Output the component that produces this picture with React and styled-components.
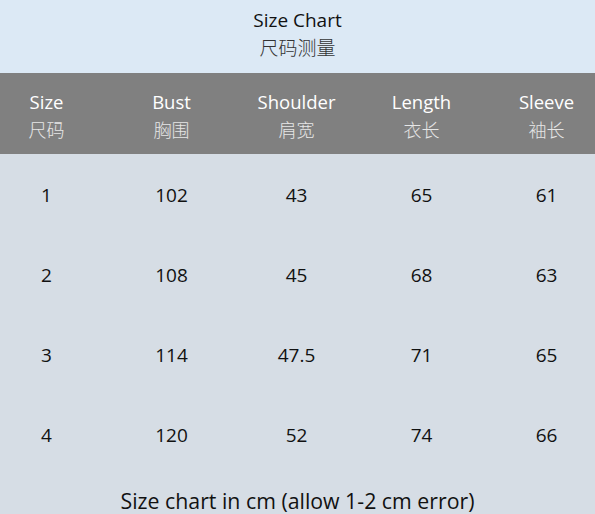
import React from "react";
import styled, { createGlobalStyle } from "styled-components";

const Global = createGlobalStyle`
  html, body { margin: 0; padding: 0; }
  body { width: 595px; height: 514px; overflow: hidden; background: #d6dde5; }
`;

const latin = `"Comic Sans MS", "Open Sans", "Noto Sans CJK SC", sans-serif`;
const cjk = `"Noto Sans CJK SC", sans-serif`;

const Page = styled.div`
  width: 595px;
  height: 514px;
  display: flex;
  flex-direction: column;
  background: #d6dde5;
  overflow: hidden;
`;

const TitleBand = styled.header`
  height: 73px;
  flex-shrink: 0;
  background: #dce9f5;
  display: flex;
  flex-direction: column;
  align-items: center;
  padding-top: 7px;
  box-sizing: border-box;
`;

const Title = styled.div`
  font-family: ${latin};
  font-size: 19px;
  line-height: 26px;
  color: #111;
`;

const SubTitle = styled.div`
  font-family: ${cjk};
  font-weight: 300;
  font-size: 19px;
  line-height: 28px;
  color: #333;
`;

const Grid = styled.div`
  display: grid;
  grid-template-columns: repeat(5, 125px);
  justify-content: center;
  padding-right: 2px;
`;

const HeadRow = styled(Grid)`
  height: 81px;
  flex-shrink: 0;
  background: #808080;
  align-items: center;
`;

const HeadCell = styled.div`
  display: flex;
  flex-direction: column;
  align-items: center;
  padding-top: 4px;
`;

const HeadEn = styled.div`
  font-family: ${latin};
  font-size: 18.5px;
  line-height: 26px;
  margin-bottom: 1px;
  color: #ffffff;
`;

const HeadCn = styled.div`
  font-family: ${cjk};
  font-weight: 300;
  font-size: 18px;
  line-height: 26px;
  color: #e6e6e6;
`;

const Body = styled.div`
  display: flex;
  flex-direction: column;
  padding-top: 1px;
`;

const DataRow = styled(Grid)`
  height: 80px;
  align-items: center;
`;

const DataCell = styled.div`
  text-align: center;
  font-family: ${latin};
  font-size: 19px;
  color: #111;
`;

const Footer = styled.div`
  text-align: center;
  font-family: ${latin};
  font-size: 21.3px;
  color: #111;
  margin-top: 11px;
`;

const headers = [
  ["Size", "尺码"],
  ["Bust", "胸围"],
  ["Shoulder", "肩宽"],
  ["Length", "衣长"],
  ["Sleeve", "袖长"],
];

const rows = [
  ["1", "102", "43", "65", "61"],
  ["2", "108", "45", "68", "63"],
  ["3", "114", "47.5", "71", "65"],
  ["4", "120", "52", "74", "66"],
];

export default function App() {
  return (
    <Page>
      <Global />
      <TitleBand>
        <Title>Size Chart</Title>
        <SubTitle>尺码测量</SubTitle>
      </TitleBand>
      <HeadRow>
        {headers.map(([en, cn]) => (
          <HeadCell key={en}>
            <HeadEn>{en}</HeadEn>
            <HeadCn>{cn}</HeadCn>
          </HeadCell>
        ))}
      </HeadRow>
      <Body>
        {rows.map((r) => (
          <DataRow key={r[0]}>
            {r.map((v, i) => (
              <DataCell key={i}>{v}</DataCell>
            ))}
          </DataRow>
        ))}
      </Body>
      <Footer>Size chart in cm (allow 1-2 cm error)</Footer>
    </Page>
  );
}
